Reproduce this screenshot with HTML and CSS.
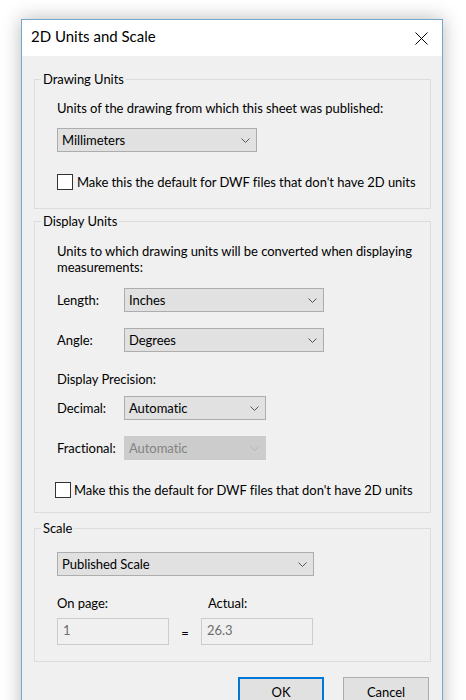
FILE: index.html
```html
<!DOCTYPE html>
<html lang="en">
  <head>
    <meta charset="utf-8" />
    <title>2D Units and Scale</title>
    <link rel="stylesheet" href="styles.css">
  </head>
  <body>
    <div class="dialog">
      <div class="titlebar">
        <span class="title">2D Units and Scale</span>
        <span class="close" title="Close">
          <svg width="13" height="13" viewBox="0 0 13 13"><path d="M0.5 0.5L12.5 12.5M12.5 0.5L0.5 12.5" stroke="#000" stroke-width="1" fill="none"/></svg>
        </span>
      </div>

      <div class="content">
        <!-- Drawing units -->
        <fieldset class="group group-drawing">
          <legend>Drawing Units</legend>
          <div class="group-body">
            <p class="note">Units of the drawing from which this sheet was published:</p>
            <div class="select w-200 mt-12">
              <span>Millimeters</span>
              <svg class="chev" width="9" height="5" viewBox="0 0 9 5"><path d="M0.5 0.5L4.5 4.5L8.5 0.5" stroke="#555" fill="none"/></svg>
            </div>
            <label class="check mt-22"><span class="box"></span>Make this the default for DWF files that don't have 2D units</label>
          </div>
        </fieldset>

        <!-- Display units -->
        <fieldset class="group group-display">
          <legend>Display Units</legend>
          <div class="group-body">
            <p class="note">Units to which drawing units will be converted when displaying measurements:</p>
            <div class="row mt-13">
              <span class="label">Length:</span>
              <div class="select w-200">
                <span>Inches</span>
                <svg class="chev" width="9" height="5" viewBox="0 0 9 5"><path d="M0.5 0.5L4.5 4.5L8.5 0.5" stroke="#555" fill="none"/></svg>
              </div>
            </div>
            <div class="row mt-16">
              <span class="label">Angle:</span>
              <div class="select w-200">
                <span>Degrees</span>
                <svg class="chev" width="9" height="5" viewBox="0 0 9 5"><path d="M0.5 0.5L4.5 4.5L8.5 0.5" stroke="#555" fill="none"/></svg>
              </div>
            </div>
            <p class="note mt-19">Display Precision:</p>
            <div class="row mt-9">
              <span class="label">Decimal:</span>
              <div class="select w-142">
                <span>Automatic</span>
                <svg class="chev" width="9" height="5" viewBox="0 0 9 5"><path d="M0.5 0.5L4.5 4.5L8.5 0.5" stroke="#555" fill="none"/></svg>
              </div>
            </div>
            <div class="row mt-16">
              <span class="label">Fractional:</span>
              <div class="select w-142 disabled">
                <span>Automatic</span>
                <svg class="chev" width="9" height="5" viewBox="0 0 9 5"><path d="M0.5 0.5L4.5 4.5L8.5 0.5" stroke="#b4b4b4" fill="none"/></svg>
              </div>
            </div>
            <label class="check check-shift mt-22"><span class="box"></span>Make this the default for DWF files that don't have 2D units</label>
          </div>
        </fieldset>

        <!-- Scale -->
        <fieldset class="group group-scale">
          <legend>Scale</legend>
          <div class="group-body">
            <div class="select w-257">
              <span>Published Scale</span>
              <svg class="chev" width="9" height="5" viewBox="0 0 9 5"><path d="M0.5 0.5L4.5 4.5L8.5 0.5" stroke="#555" fill="none"/></svg>
            </div>
            <div class="scale-labels mt-19">
              <span class="on-page">On page:</span>
              <span>Actual:</span>
            </div>
            <div class="scale-inputs">
              <div class="edit">1</div>
              <span class="equals">=</span>
              <div class="edit">26.3</div>
            </div>
          </div>
        </fieldset>

        <div class="buttons">
          <button class="btn btn-default">OK</button>
          <button class="btn">Cancel</button>
        </div>
      </div>
    </div>
  </body>
</html>
```

FILE: styles.css
```css
html {
  background-color: #ffffff;
}

body {
  margin: 0;
  padding: 19px 0 0 21px;
  font-family: 'Segoe UI', Lato, sans-serif;
  font-size: 13px;
  letter-spacing: -0.05px;
  color: #000000;
  -webkit-font-smoothing: antialiased;
}

p {
  margin: 0;
}

.dialog {
  width: 422px;
  height: 720px;
  box-sizing: border-box;
  border: 1px solid #74a8c9;
  background-color: #f0f0f0;
  box-shadow: 0 0 18px rgba(0, 0, 0, 0.28);
}

/* Title bar */
.titlebar {
  height: 36px;
  display: flex;
  align-items: center;
  justify-content: space-between;
  padding-left: 9px;
  background-color: #ffffff;
}

.title {
  font-size: 15px;
  letter-spacing: 0;
  padding-bottom: 4px;
}

.close {
  display: flex;
  margin-right: 14px;
}

.content {
  padding: 14px 11px 0 12px;
}

/* Group boxes */
.group {
  margin: 0;
  padding: 0;
  border: 1px solid #dcdcdc;
  min-width: 0;
}

.group legend {
  margin-left: 6px;
  padding: 0 2px;
  line-height: 18px;
}

.group-display {
  margin-top: 3px;
}

.group-scale {
  margin-top: 6px;
}

.group-body {
  padding: 0 10px 0 22px;
}

.group-drawing .group-body {
  padding-top: 12px;
  padding-bottom: 18px;
}

.group-display .group-body {
  padding-top: 13px;
  padding-bottom: 14px;
}

.group-scale .group-body {
  padding-top: 15px;
  padding-bottom: 16px;
}

.note {
  line-height: 16px;
}

.mt-9 { margin-top: 9px; }
.mt-12 { margin-top: 12px; }
.mt-13 { margin-top: 13px; }
.mt-16 { margin-top: 16px; }
.mt-19 { margin-top: 19px; }
.mt-22 { margin-top: 22px; }

/* Combo boxes */
.select {
  height: 24px;
  box-sizing: border-box;
  display: flex;
  align-items: center;
  justify-content: space-between;
  padding: 0 6px 0 4px;
  border: 1px solid #adadad;
  background-color: #e1e1e1;
}

.select.disabled {
  border-color: #cccccc;
  background-color: #cccccc;
  color: #838383;
}

.w-142 { width: 142px; }
.w-200 { width: 200px; }
.w-257 { width: 257px; }

.chev {
  display: block;
}

.row {
  display: flex;
  align-items: center;
}

.row .label {
  width: 67px;
}

/* Checkboxes */
.check {
  display: flex;
  align-items: center;
  height: 16px;
  white-space: nowrap;
}

.check .box {
  width: 16px;
  height: 16px;
  flex: none;
  box-sizing: border-box;
  margin-right: 4px;
  border: 1px solid #333333;
  background-color: #ffffff;
}

.check-shift {
  margin-left: -2px;
}

.check-shift .box {
  margin-right: 3px;
}

/* Scale fields */
.scale-labels {
  display: flex;
  line-height: 16px;
}

.on-page {
  width: 151px;
}

.scale-inputs {
  display: flex;
  align-items: center;
  margin-top: 7px;
}

.edit {
  width: 112px;
  height: 27px;
  box-sizing: border-box;
  padding: 3px 0 0 5px;
  border: 1px solid #cccccc;
  background-color: #f0f0f0;
  color: #6d6d6d;
}

.equals {
  width: 32px;
  text-align: center;
  padding-top: 3px;
}

/* Dialog buttons */
.buttons {
  display: flex;
  justify-content: flex-end;
  gap: 19px;
  margin: 15px 2px 0 0;
}

.btn {
  width: 86px;
  height: 28px;
  font-family: inherit;
  font-size: 13px;
  letter-spacing: -0.05px;
  border: 1px solid #adadad;
  background-color: #e1e1e1;
  color: #000000;
  padding: 2px 0 0;
}

.btn-default {
  border: 2px solid #0078d7;
}
```
